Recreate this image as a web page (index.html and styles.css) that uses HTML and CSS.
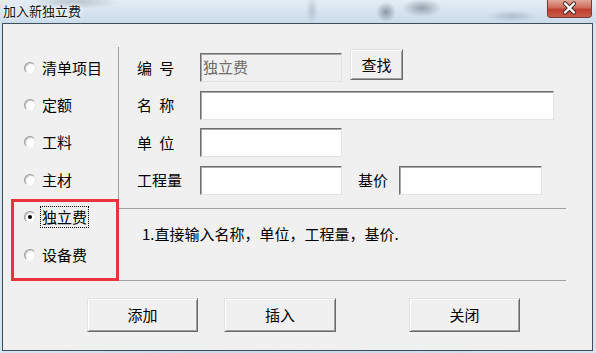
FILE: index.html
```html
<!DOCTYPE html>
<html lang="zh-CN">
<head>
<meta charset="utf-8">
<title>加入新独立费</title>
<link rel="stylesheet" href="styles.css">
</head>
<body>
<div class="window">
  <div class="titlebar">
    <span class="title">加入新独立费</span>
    <div class="close">
      <svg width="45" height="18" viewBox="0 0 45 18">
        <path d="M18 3.5 L27 12.5 M27 3.5 L18 12.5" stroke="#3a2a28" stroke-width="4.2" stroke-linecap="round" fill="none"/>
        <path d="M18 3.5 L27 12.5 M27 3.5 L18 12.5" stroke="#ffffff" stroke-width="2.4" stroke-linecap="round" fill="none"/>
      </svg>
    </div>
  </div>
  <div class="client">
    <div class="main">
      <div class="left">
        <label class="radio"><span class="dot"></span><span class="rtext">清单项目</span></label>
        <label class="radio"><span class="dot"></span><span class="rtext">定额</span></label>
        <label class="radio"><span class="dot"></span><span class="rtext">工料</span></label>
        <label class="radio"><span class="dot"></span><span class="rtext">主材</span></label>
        <label class="radio"><span class="dot checked"></span><span class="rtext focus">独立费</span></label>
        <label class="radio"><span class="dot"></span><span class="rtext">设备费</span></label>
      </div>
      <div class="right">
        <div class="fields">
          <div class="row">
            <span class="lbl">编 号</span>
            <div class="input short disabled">独立费</div>
            <div class="btn find">查找</div>
          </div>
          <div class="row">
            <span class="lbl">名 称</span>
            <div class="input long"></div>
          </div>
          <div class="row">
            <span class="lbl">单 位</span>
            <div class="input short"></div>
          </div>
          <div class="row">
            <span class="lbl">工程量</span>
            <div class="input short"></div>
            <span class="lbl2">基价</span>
            <div class="input price"></div>
          </div>
        </div>
        <div class="hint">1.直接输入名称，单位，工程量，基价.</div>
      </div>
    </div>
    <div class="buttons">
      <div class="btn big add">添加</div>
      <div class="btn big insert">插入</div>
      <div class="btn big closebtn">关闭</div>
    </div>
  </div>
  <div class="annot"></div>
</div>
</body>
</html>
```

FILE: styles.css
```css
* { box-sizing: border-box; margin: 0; padding: 0; }
html, body { width: 596px; height: 353px; overflow: hidden; }
body {
  font-family: "Noto Sans CJK SC", "Liberation Sans", sans-serif;
  font-size: 15px;
  color: #000;
  background: #cddcea;
}
.window {
  position: relative;
  width: 596px;
  height: 353px;
  background: linear-gradient(90deg, #d6e4f0, #c9dae9 50%, #d8e5f0);
}
.titlebar {
  height: 23px;
  display: flex;
  align-items: flex-start;
  padding-left: 3px;
  background:
    radial-gradient(ellipse 45px 7px at 75px 2px, rgba(70,85,100,.28), transparent),
    radial-gradient(ellipse 6px 14px at 312px 10px, rgba(70,85,100,.22), transparent),
    radial-gradient(ellipse 10px 10px at 386px 12px, rgba(50,60,75,.45), transparent),
    radial-gradient(ellipse 20px 9px at 422px 8px, rgba(50,60,75,.4), transparent),
    radial-gradient(ellipse 25px 6px at 512px 16px, rgba(70,85,100,.25), transparent),
    linear-gradient(180deg, #e4edf5, #cadbea);
}
.title {
  font-size: 13px;
  line-height: 22px;
  color: #111;
  text-shadow: 0 0 6px #fff, 0 0 3px #fff;
}
.close {
  margin-left: auto;
  margin-right: 4px;
  width: 45px;
  height: 18px;
  border: 1px solid #7a3a33;
  border-top: none;
  border-radius: 0 0 4px 4px;
  background: linear-gradient(180deg, #e2a597 0%, #d06c5c 45%, #bf3f30 55%, #c95a45 100%);
  overflow: hidden;
}
.close svg { display: block; margin-left: -1px; }
.client {
  margin: 0 3px 0 2px;
  height: 328px;
  border: 1px solid #3e4c5c;
  background: #f0f0f0;
}
.main {
  margin-top: 23px;
  display: flex;
  height: 234px;
}
.left {
  width: 116px;
  border-right: 1px solid #a0a0a0;
  padding-top: 2px;
  padding-left: 21px;
}
.radio {
  height: 37.4px;
  display: flex;
  align-items: center;
}
.dot {
  width: 12px;
  height: 12px;
  border-radius: 50%;
  background: #fff;
  border: 1px solid;
  border-color: #9a9a9a #e6e6e6 #f4f4f4 #9a9a9a;
  box-shadow: inset 1px 1px 1px #c8c8c8;
  position: relative;
  flex: none;
}
.dot.checked::after {
  content: "";
  position: absolute;
  left: 3px;
  top: 3px;
  width: 4px;
  height: 4px;
  border-radius: 50%;
  background: #000;
}
.rtext {
  margin-left: 4px;
  line-height: 20px;
  padding: 0 1px;
  border: 1px solid transparent;
}
.rtext.focus { border: 1px dotted #000; }
.right {
  width: 447px;
  border-bottom: 1px solid #a0a0a0;
}
.fields {
  height: 162px;
  border-bottom: 1px solid #a0a0a0;
  padding-top: 6px;
  padding-left: 18px;
  display: flex;
  flex-direction: column;
  gap: 8.5px;
}
.row {
  display: flex;
  align-items: center;
  height: 29px;
}
.lbl {
  width: 63px;
  word-spacing: 4px;
  line-height: 20px;
}
.lbl2 {
  margin-left: 16px;
  width: 41px;
  line-height: 20px;
}
.input {
  height: 29px;
  background: #fff;
  border: 1px solid;
  border-color: #6e6e6e #e3e3e3 #e3e3e3 #6e6e6e;
  box-shadow: inset 1px 1px 0 #a8a8a8;
  font-size: 15px;
  line-height: 26px;
  padding-left: 2px;
}
.input.short { width: 142px; }
.input.long { width: 354px; }
.input.price { width: 143px; }
.input.disabled { background: #f0f0f0; color: #6d6d6d; }
.btn {
  display: flex;
  align-items: center;
  justify-content: center;
  background: #f0f0f0;
  border: 1px solid;
  border-color: #e3e3e3 #696969 #696969 #e3e3e3;
  box-shadow: inset 1px 1px 0 #fff, inset -1px -1px 0 #a0a0a0;
  line-height: 20px;
}
.btn.find {
  margin-left: 8px;
  width: 53px;
  height: 31px;
  align-self: flex-start;
  margin-top: -4px;
}
.hint {
  height: 71px;
  padding-top: 15px;
  padding-left: 23px;
  line-height: 20px;
}
.buttons {
  display: flex;
  margin-top: 17px;
  padding-left: 84px;
}
.btn.big { height: 34px; width: 111px; }
.btn.insert { margin-left: 26px; width: 112px; }
.btn.closebtn { margin-left: 73px; }
.annot {
  position: absolute;
  left: 11px;
  top: 199px;
  width: 108px;
  height: 82px;
  border: 3px solid #e8353d;
  pointer-events: none;
}
```
